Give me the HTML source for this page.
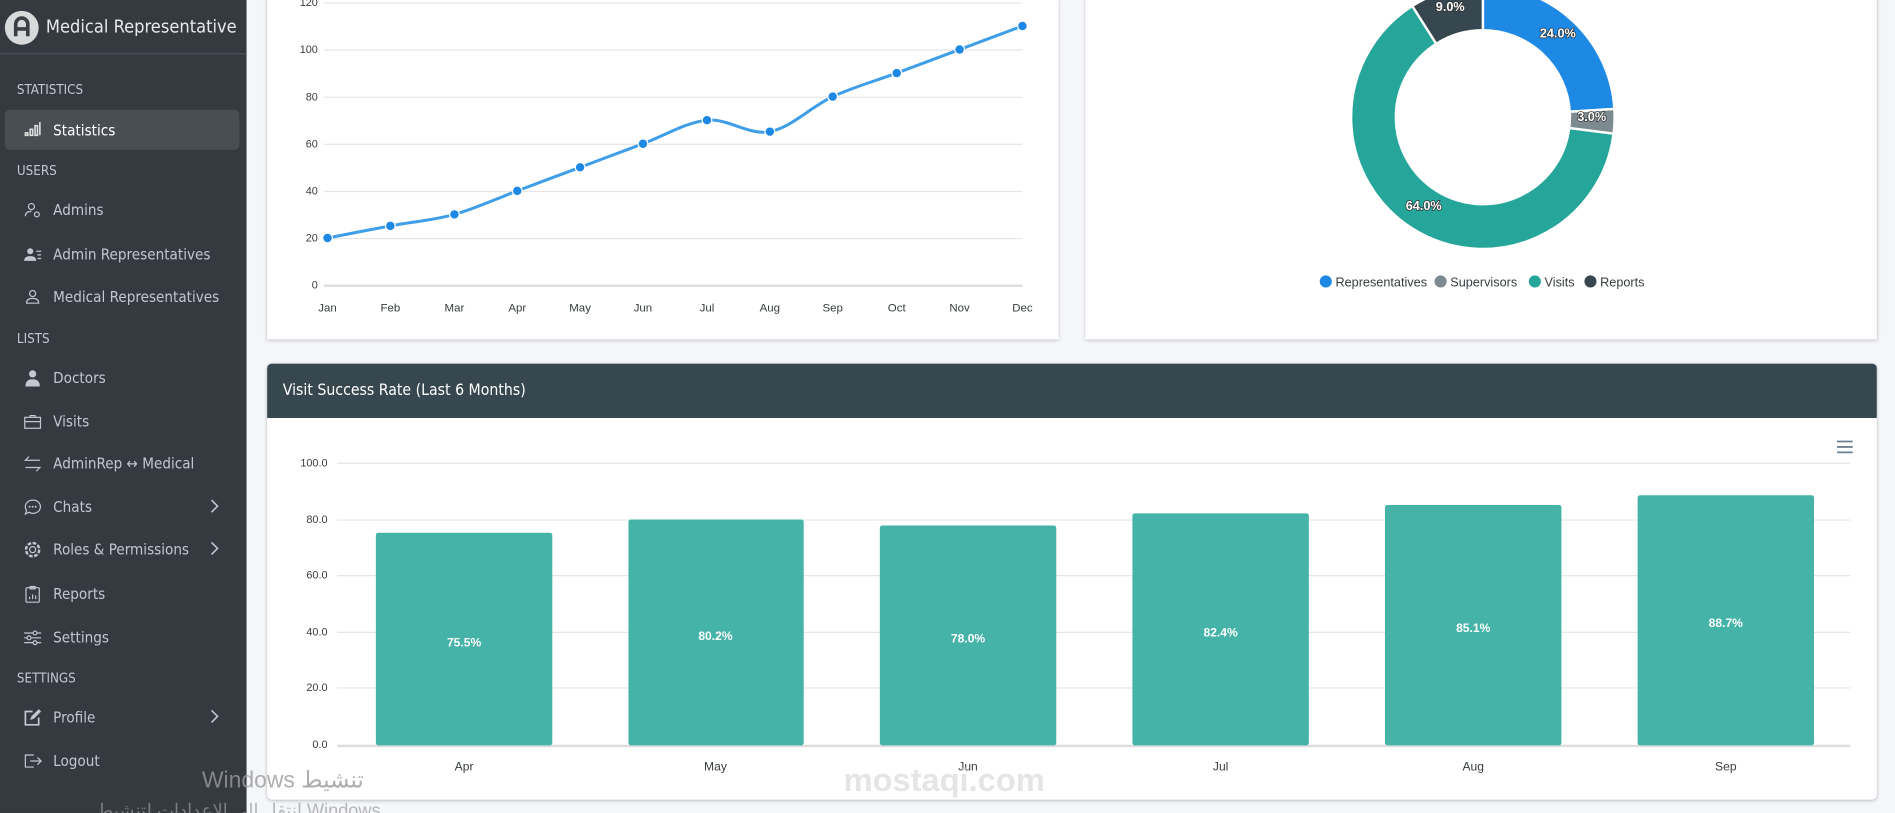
<!DOCTYPE html>
<html><head><meta charset="utf-8">
<style>
html,body{margin:0;padding:0;width:1895px;height:813px;overflow:hidden;background:#f4f6f9}
#w{position:absolute;left:0;top:0;width:1568px;height:673px;transform:scale(1.20855,1.2080);transform-origin:0 0;font-family:"Liberation Sans",sans-serif}
#sb{position:absolute;left:0;top:0;width:204px;height:673px;background:#343a40;color:#c2c7d0;font-family:"DejaVu Sans Condensed","Liberation Sans",sans-serif}
.brand{position:absolute;left:0;top:0;width:204px;height:44px;border-bottom:1px solid #4b545c}
.logo{position:absolute;left:4px;top:9px;width:28px;height:28px;border-radius:50%;background:#d7d9db}
.brand span{position:absolute;left:38px;top:13px;font-size:15px;color:#e8e9ea;white-space:nowrap}
.sec{position:absolute;left:14px;font-size:11px;color:#c2c7d0}
.it{position:absolute;left:44px;font-size:12.5px;color:#c2c7d0}
.ic{position:absolute;left:19px;width:16px;height:16px}
.chev{position:absolute;left:172px;width:10px;height:14px}
.act{position:absolute;left:4px;top:91px;width:194px;height:33px;border-radius:4px;background:#494e55}
.card{position:absolute;background:#fff;box-shadow:0 0 1px rgba(0,0,0,.13),0 1px 3px rgba(0,0,0,.2)}
svg text{font-family:"Liberation Sans",sans-serif}
</style></head><body><div id="w">
<div id="sb">
<div class="brand"><div class="logo"><svg width="28" height="28"><path d="M9 21V11a5 5 0 0 1 10 0v10M9 15h10" stroke="#3a3f45" stroke-width="3" fill="none"/></svg></div><span>Medical Representative</span></div>
<div class="sec" style="top:68px">STATISTICS</div>
<div class="act"></div>
<svg class="ic" style="top:99px" viewBox="0 0 16 16"><path d="M2 13h2v-2H2zM6 13h2V8H6zM10 13h2V5h-2zM14 13V2" stroke="#e0e0e0" fill="none" stroke-width="1.3"/></svg>
<div class="it" style="top:100px;color:#fff">Statistics</div>
<div class="sec" style="top:135px">USERS</div>
<svg class="ic" style="top:166px" viewBox="0 0 16 16"><circle cx="7" cy="5" r="2.5" stroke="#c2c7d0" fill="none"/><path d="M2 13c0-3 2-4 5-4" stroke="#c2c7d0" fill="none"/><circle cx="11.5" cy="11.5" r="2" stroke="#c2c7d0" fill="none"/></svg>
<div class="it" style="top:166px">Admins</div>
<svg class="ic" style="top:203px" viewBox="0 0 16 16"><circle cx="6" cy="5" r="2.5" fill="#c2c7d0"/><path d="M1 13c0-3 2-4 5-4s5 1 5 4z" fill="#c2c7d0"/><path d="M11 5h4M12 8h3M12 11h3" stroke="#c2c7d0"/></svg>
<div class="it" style="top:203px">Admin Representatives</div>
<svg class="ic" style="top:238px" viewBox="0 0 16 16"><circle cx="8" cy="5" r="2.5" stroke="#c2c7d0" fill="none"/><path d="M3 13c0-3 2-4 5-4s5 1 5 4z" stroke="#c2c7d0" fill="none"/></svg>
<div class="it" style="top:238px">Medical Representatives</div>
<div class="sec" style="top:274px">LISTS</div>
<svg class="ic" style="top:305px" viewBox="0 0 16 16"><circle cx="8" cy="4.5" r="3" fill="#c2c7d0"/><path d="M2 15c0-5 3-6 6-6s6 1 6 6z" fill="#c2c7d0"/></svg>
<div class="it" style="top:305px">Doctors</div>
<svg class="ic" style="top:341px" viewBox="0 0 16 16"><rect x="1.5" y="4.5" width="13" height="9" stroke="#c2c7d0" fill="none"/><path d="M6 4.5V3h4v1.5M1.5 8h13" stroke="#c2c7d0" fill="none"/></svg>
<div class="it" style="top:341px">Visits</div>
<svg class="ic" style="top:376px" viewBox="0 0 16 16"><path d="M14 5H2l3-3M2 11h12l-3 3" stroke="#c2c7d0" fill="none"/></svg>
<div class="it" style="top:376px">AdminRep ↔ Medical</div>
<svg class="ic" style="top:412px" viewBox="0 0 16 16"><path d="M8 2a6 5.5 0 1 1-3 10l-3 1.5 1-3A6 5.5 0 0 1 8 2z" stroke="#c2c7d0" fill="none"/><circle cx="5.5" cy="7.5" r=".8" fill="#c2c7d0"/><circle cx="8" cy="7.5" r=".8" fill="#c2c7d0"/><circle cx="10.5" cy="7.5" r=".8" fill="#c2c7d0"/></svg>
<div class="it" style="top:412px">Chats</div><svg class="chev" style="top:412px" viewBox="0 0 10 14"><path d="M3 2l5 5-5 5" stroke="#c2c7d0" stroke-width="1.3" fill="none"/></svg>
<svg class="ic" style="top:447px" viewBox="0 0 16 16"><circle cx="8" cy="8" r="2.5" stroke="#c2c7d0" fill="none"/><circle cx="8" cy="8" r="5.5" stroke="#c2c7d0" stroke-dasharray="3 1.3" stroke-width="2" fill="none"/></svg>
<div class="it" style="top:447px">Roles &amp; Permissions</div><svg class="chev" style="top:447px" viewBox="0 0 10 14"><path d="M3 2l5 5-5 5" stroke="#c2c7d0" stroke-width="1.3" fill="none"/></svg>
<svg class="ic" style="top:484px" viewBox="0 0 16 16"><rect x="2.5" y="2.5" width="11" height="12" rx="1" stroke="#c2c7d0" fill="none"/><path d="M6 1.5h4v2H6zM5.5 12V10M8 12V8M10.5 12V9" stroke="#c2c7d0" fill="none"/></svg>
<div class="it" style="top:484px">Reports</div>
<svg class="ic" style="top:520px" viewBox="0 0 16 16"><path d="M1 4h14M1 8h14M1 12h14" stroke="#c2c7d0"/><circle cx="10" cy="4" r="1.6" fill="#343a40" stroke="#c2c7d0"/><circle cx="5" cy="8" r="1.6" fill="#343a40" stroke="#c2c7d0"/><circle cx="10" cy="12" r="1.6" fill="#343a40" stroke="#c2c7d0"/></svg>
<div class="it" style="top:520px">Settings</div>
<div class="sec" style="top:555px">SETTINGS</div>
<svg class="ic" style="top:586px" viewBox="0 0 16 16"><path d="M13 8v6H2V3h6" stroke="#c2c7d0" stroke-width="1.4" fill="none"/><path d="M6 10l1-3 6-6 2 2-6 6z" fill="#c2c7d0"/></svg>
<div class="it" style="top:586px">Profile</div><svg class="chev" style="top:586px" viewBox="0 0 10 14"><path d="M3 2l5 5-5 5" stroke="#c2c7d0" stroke-width="1.3" fill="none"/></svg>
<svg class="ic" style="top:622px" viewBox="0 0 16 16"><path d="M9 3H2v10h7M6 8h9M12 5l3 3-3 3" stroke="#c2c7d0" fill="none"/></svg>
<div class="it" style="top:622px">Logout</div>
</div>

<div class="card" style="left:221px;top:-4px;width:655px;height:285px"></div>
<div class="card" style="left:898px;top:-4px;width:655px;height:285px"></div>
<div class="card" style="left:221px;top:301px;width:1332px;height:361px;border-radius:4px;overflow:hidden"><div style="height:45px;background:#37474f;color:#fff;font-family:'DejaVu Sans Condensed','Liberation Sans',sans-serif;font-size:13px;line-height:45px;padding-left:13px">Visit Success Rate (Last 6 Months)</div></div>

<svg style="position:absolute;left:0;top:0" width="1568" height="673">
<g stroke="#e6e6e6" stroke-width="1">
<line x1="268" x2="846" y1="2.5" y2="2.5"/><line x1="268" x2="846" y1="41.5" y2="41.5"/><line x1="268" x2="846" y1="80.5" y2="80.5"/><line x1="268" x2="846" y1="119.5" y2="119.5"/><line x1="268" x2="846" y1="158.5" y2="158.5"/><line x1="268" x2="846" y1="197.5" y2="197.5"/><line x1="268" x2="846" y1="236.5" y2="236.5" stroke="#ddd" stroke-width="2"/>
</g>
<g font-size="9" fill="#373d3f" text-anchor="end">
<text x="263" y="5">120</text><text x="263" y="44">100</text><text x="263" y="83">80</text><text x="263" y="122">60</text><text x="263" y="161">40</text><text x="263" y="200">20</text><text x="263" y="239">0</text></g>
<g font-size="9.5" fill="#373d3f" text-anchor="middle">
<text x="271" y="258">Jan</text><text x="323" y="258">Feb</text><text x="376" y="258">Mar</text><text x="428" y="258">Apr</text><text x="480" y="258">May</text><text x="532" y="258">Jun</text><text x="585" y="258">Jul</text><text x="637" y="258">Aug</text><text x="689" y="258">Sep</text><text x="742" y="258">Oct</text><text x="794" y="258">Nov</text><text x="846" y="258">Dec</text></g>
<path fill="none" stroke="#3f9ee8" stroke-width="2.5" d="M271,197 C279.7,195.3 305.5,190.25 323,187 C340.5,183.75 358.5,182.33 376,177.5 C393.5,172.67 410.67,164.5 428,158 C445.33,151.5 462.67,145 480,138.5 C497.33,132 514.5,125.5 532,119 C549.5,112.5 567.5,101.17 585,99.5 C602.5,97.83 619.67,112.25 637,109 C654.33,105.75 671.5,88.08 689,80 C706.5,71.92 724.5,67 742,60.5 C759.5,54 776.67,47.5 794,41 C811.33,34.5 837.33,24.75 846,21.5"/>
<g fill="#1e88e5" stroke="#fff" stroke-width="1">
<circle cx="271" cy="197" r="4"/><circle cx="323" cy="187" r="4"/><circle cx="376" cy="177.5" r="4"/><circle cx="428" cy="158" r="4"/><circle cx="480" cy="138.5" r="4"/><circle cx="532" cy="119" r="4"/><circle cx="585" cy="99.5" r="4"/><circle cx="637" cy="109" r="4"/><circle cx="689" cy="80" r="4"/><circle cx="742" cy="60.5" r="4"/><circle cx="794" cy="41" r="4"/><circle cx="846" cy="21.5" r="4"/></g>

<g stroke="#fff" stroke-width="2">
<path d="M1227,-12 A109,109 0 0 1 1335.8,90.2 L1298.9,92.5 A72,72 0 0 0 1227,25Z" fill="#1e88e5"/>
<path d="M1335.8,90.2 A109,109 0 0 1 1335.1,110.7 L1298.4,106 A72,72 0 0 0 1298.9,92.5Z" fill="#7d8a8f"/>
<path d="M1335.1,110.7 A109,109 0 1 1 1168.6,5 L1188.4,36.2 A72,72 0 1 0 1298.4,106Z" fill="#26a69a"/>
<path d="M1168.6,5 A109,109 0 0 1 1227,-12 L1227,25 A72,72 0 0 0 1188.4,36.2Z" fill="#37474f"/>
</g>
<g font-size="10.5" font-weight="bold" fill="#fff" text-anchor="middle" style="paint-order:stroke" stroke="#333" stroke-width="1.2">
<text x="1289" y="31">24.0%</text><text x="1317" y="100">3.0%</text><text x="1178" y="174">64.0%</text><text x="1200" y="9">9.0%</text></g>
<g font-size="10.5" fill="#373d3f"><circle cx="1097" cy="233" r="5" fill="#1e88e5"/><text x="1105" y="237">Representatives</text>
<circle cx="1192" cy="233" r="5" fill="#7d8a8f"/><text x="1200" y="237">Supervisors</text>
<circle cx="1270" cy="233" r="5" fill="#26a69a"/><text x="1278" y="237">Visits</text>
<circle cx="1316" cy="233" r="5" fill="#37474f"/><text x="1324" y="237">Reports</text></g>

<g stroke="#e6e6e6"><line x1="279" x2="1531" y1="383.5" y2="383.5"/><line x1="279" x2="1531" y1="430.5" y2="430.5"/><line x1="279" x2="1531" y1="476.5" y2="476.5"/><line x1="279" x2="1531" y1="523.5" y2="523.5"/><line x1="279" x2="1531" y1="569.5" y2="569.5"/><line x1="279" x2="1531" y1="617.5" y2="617.5" stroke="#ddd" stroke-width="2"/></g>
<g font-size="9" fill="#373d3f" text-anchor="end"><text x="271" y="386">100.0</text><text x="271" y="433">80.0</text><text x="271" y="479">60.0</text><text x="271" y="526">40.0</text><text x="271" y="572">20.0</text><text x="271" y="619">0.0</text></g>
<g fill="#45b3a8">
<rect x="311" y="441" width="146" height="176" rx="2"/><rect x="520" y="430" width="145" height="187" rx="2"/><rect x="728" y="435" width="146" height="182" rx="2"/><rect x="937" y="425" width="146" height="192" rx="2"/><rect x="1146" y="418" width="146" height="199" rx="2"/><rect x="1355" y="410" width="146" height="207" rx="2"/></g>
<g font-size="10" font-weight="bold" fill="#fff" text-anchor="middle"><text x="384" y="535">75.5%</text><text x="592" y="530">80.2%</text><text x="801" y="532">78.0%</text><text x="1010" y="527">82.4%</text><text x="1219" y="523">85.1%</text><text x="1428" y="519">88.7%</text></g>
<g font-size="10" fill="#373d3f" text-anchor="middle"><text x="384" y="638">Apr</text><text x="592" y="638">May</text><text x="801" y="638">Jun</text><text x="1010" y="638">Jul</text><text x="1219" y="638">Aug</text><text x="1428" y="638">Sep</text></g>
<path d="M1520 365.5h13M1520 370h13M1520 374.5h13" stroke="#6e8192" stroke-width="1.5"/>
<text x="698" y="655" font-size="27" font-weight="bold" fill="#d0d0d0" fill-opacity=".55">mostaqi.com</text>
<text x="167" y="652" font-size="19" fill="#9a9a9a" fill-opacity=".8" font-family="Liberation Sans,DejaVu Sans,sans-serif">Windows تنشيط</text>
<text x="80" y="676" font-size="15" fill="#9a9a9a" fill-opacity=".7" font-family="Liberation Sans,DejaVu Sans,sans-serif">انتقل إلى الإعدادات لتنشيط Windows</text>
</svg>
</div></body></html>
